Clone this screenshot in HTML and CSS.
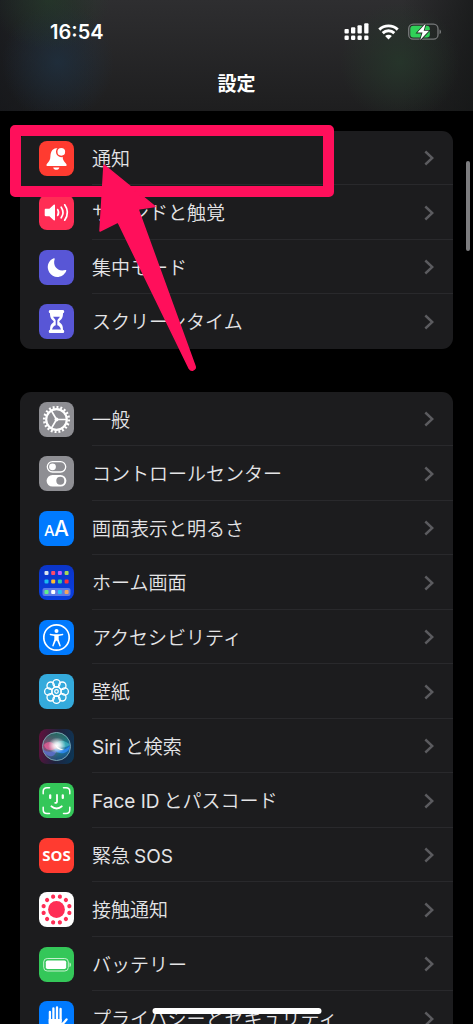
FILE: index.html
```html
<!DOCTYPE html>
<html lang="ja">
<head>
  <meta charset="UTF-8">
  <meta name="viewport" content="width=device-width, initial-scale=1.0">
  <title>設定</title>
  <link rel="stylesheet" href="styles.css">
</head>
<body>

  <!-- shared chevron -->
  <svg class="defs" aria-hidden="true">
    <symbol id="chevron" viewBox="0 0 10 16">
      <path d="M1.300 1.500 8.300 8l-7 6.500" fill="none" stroke="currentColor" stroke-width="2.400"/>
    </symbol>
  </svg>

  <!-- Header -->
  <header class="header">
    <div class="status-bar">
      <span class="time">16:54</span>
      <div class="status-icons">
        <svg width="25" height="18" viewBox="0 0 25 18" fill="#fff">
          <rect x="0.500" y="6" width="4.300" height="4.500" rx="1"/>
          <rect x="7" y="4.300" width="4.300" height="6.200" rx="1"/>
          <rect x="13.500" y="2.300" width="4.300" height="8.200" rx="1"/>
          <rect x="20.200" y="0.300" width="4.300" height="10.200" rx="1"/>
          <rect x="0.500" y="12.500" width="4.300" height="4.500" rx="1.300"/>
          <rect x="7" y="12.500" width="4.300" height="4.500" rx="1.300"/>
          <rect x="13.500" y="12.500" width="4.300" height="4.500" rx="1.300"/>
          <rect x="20.200" y="12.500" width="4.300" height="4.500" rx="1.300"/>
        </svg>
        <svg width="21" height="16" viewBox="0 0 21 16">
          <path d="M1.300 5.600a13.200 13.200 0 0 1 18.400 0M4.700 9.100a8.300 8.300 0 0 1 11.600 0" fill="none" stroke="#fff" stroke-width="2.900"/>
          <path d="M10.500 15.600 7.100 12.100a4.900 4.900 0 0 1 6.800 0z" fill="#fff"/>
        </svg>
        <svg width="34" height="18" viewBox="0 0 34 18">
          <rect x="0.700" y="1.200" width="29.300" height="15" rx="4.500" fill="none" stroke="#77797a" stroke-width="1.300"/>
          <path d="M31.500 6.500c2 .6 2 4 0 4.600z" fill="#77797a"/>
          <rect x="2.300" y="2.800" width="19.500" height="11.800" rx="3" fill="#30d158"/>
          <path d="M17.700.5 9.300 9.600h5.200l-2.300 7.500 8.800-9.400h-5.300z" fill="#fff" stroke="#222b25" stroke-width="1.600" paint-order="stroke"/>
        </svg>
      </div>
    </div>
    <h1 class="title">設定</h1>
  </header>

  <!-- Settings list -->
  <main class="settings">
    <nav class="group">
      <a class="row" href="#">
        <svg class="icon red" viewBox="0 0 35 35">
          <path d="M17.300 7.300c-4.600.6-5.600 4.200-5.900 8.200-.2 3.300-1 4.700-3 6.700-1.400 1.400-1.300 2.900.5 2.900h17.300c1.800 0 1.900-1.500.5-2.900-2-2-2.900-3.400-3.100-6.700-.3-4-1.700-7.600-6.300-8.200z" fill="#fff"/>
          <path d="M14.200 26.400h6.200c-.5 3.200-5.700 3.200-6.200 0z" fill="#fff"/>
          <circle cx="22.300" cy="10.800" r="4.600" fill="#fff" stroke="#ff3b30" stroke-width="1.500"/>
        </svg>
        <span class="label">通知</span>
        <svg class="chevron"><use href="#chevron"/></svg>
      </a>
      <a class="row" href="#">
        <svg class="icon pink" viewBox="0 0 35 35">
          <path d="M6.800 13.800h3.600l4.300-4c.7-.6 1.300-.3 1.300.5v14.400c0 .8-.6 1.100-1.300.5l-4.300-4H6.800c-.7 0-1.100-.4-1.100-1.100v-5.200c0-.7.4-1.100 1.100-1.100z" fill="#fff"/>
          <path d="M18.700 14.600c1.100 1.800 1.100 4 0 5.800M22.200 12.200c2.200 3.300 2.200 7.300 0 10.600M25.700 9.800c3.300 4.700 3.300 10.700 0 15.400" fill="none" stroke="#fff" stroke-width="1.700" stroke-linecap="round"/>
        </svg>
        <span class="label">サウンドと触覚</span>
        <svg class="chevron"><use href="#chevron"/></svg>
      </a>
      <a class="row" href="#">
        <svg class="icon indigo" viewBox="0 0 35 35">
          <path d="M14.800 8.300c.6-.3 1.100.1.900.8-2.400 7 3.200 13.200 10.600 10.900.8-.3 1.200.2.900.9-3.300 7.400-12.900 8.100-17 1.300-3.100-5.500-1-11.700 4.600-13.900z" fill="#fff"/>
        </svg>
        <span class="label">集中モード</span>
        <svg class="chevron"><use href="#chevron"/></svg>
      </a>
      <a class="row" href="#">
        <svg class="icon indigo" viewBox="0 0 35 35">
          <path d="M11.500 6h12c1.200 0 1.700.6 1.700 1.600s-.5 1.500-1.200 1.700c0 4.300-1.200 6-3.200 7.400-.8.600-.8 1.200 0 1.800 2 1.400 3.200 3.100 3.200 7.200.7.200 1.200.7 1.200 1.700s-.5 1.600-1.700 1.600h-12c-1.200 0-1.700-.6-1.700-1.600s.5-1.500 1.200-1.700c0-4.100 1.200-5.800 3.200-7.200.8-.6.8-1.200 0-1.800-2-1.400-3.200-3.100-3.200-7.400-.7-.2-1.200-.7-1.200-1.700S10.300 6 11.500 6z" fill="#fff"/>
          <path d="M14.100 12.700h6.800c-.5 1.500-2.600 2.300-2.600 4.100v4.400c1.700.5 3.200 2 3.600 4.300h-8.800c.4-2.300 1.900-3.800 3.600-4.300v-4.400c0-1.800-2.100-2.600-2.600-4.100z" fill="#5856d6"/>
        </svg>
        <span class="label">スクリーンタイム</span>
        <svg class="chevron"><use href="#chevron"/></svg>
      </a>
    </nav>

    <nav class="group">
      <a class="row" href="#">
        <svg class="icon gray" viewBox="0 0 35 35">
          <g fill="none" stroke="#fff">
            <circle cx="17.500" cy="17.500" r="12.300" stroke-width="2.600" pathLength="40" stroke-dasharray="1 1"/>
            <circle cx="17.500" cy="17.500" r="10.300" stroke-width="2.200"/>
            <path d="M17.500 17.500h10M17.500 17.500l-5-8.700M17.500 17.500l-5 8.700" stroke-width="1.700"/>
          </g>
          <circle cx="17.500" cy="17.500" r="2" fill="#fff"/>
        </svg>
        <span class="label">一般</span>
        <svg class="chevron"><use href="#chevron"/></svg>
      </a>
      <a class="row" href="#">
        <svg class="icon gray" viewBox="0 0 35 35">
          <rect x="8.300" y="5.600" width="18.400" height="10.400" rx="5.200" fill="none" stroke="#fff" stroke-width="1.300"/>
          <circle cx="13.500" cy="10.800" r="3.400" fill="#fff"/>
          <rect x="7.600" y="19" width="19.800" height="11.600" rx="5.800" fill="#fff"/>
          <circle cx="21.300" cy="24.800" r="4" fill="#8e8e93"/>
        </svg>
        <span class="label">コントロールセンター</span>
        <svg class="chevron"><use href="#chevron"/></svg>
      </a>
      <a class="row" href="#">
        <svg class="icon blue" viewBox="0 0 35 35">
          <text class="icon-text" x="5" y="25" font-size="15">A</text>
          <text class="icon-text" x="15" y="25" font-size="21">A</text>
        </svg>
        <span class="label">画面表示と明るさ</span>
        <svg class="chevron"><use href="#chevron"/></svg>
      </a>
      <a class="row" href="#">
        <svg class="icon home" viewBox="0 0 35 35">
          <rect x="3.500" y="23" width="28" height="8" rx="2" fill="#5d7be6"/>
          <rect x="5.500" y="6" width="4" height="4" rx="1" fill="#dce6ef"/>
          <rect x="12.200" y="6" width="4" height="4" rx="1" fill="#ff4a68"/>
          <rect x="18.900" y="6" width="4" height="4" rx="1" fill="#c15cff"/>
          <rect x="25.600" y="6" width="4" height="4" rx="1" fill="#a6d957"/>
          <rect x="5.500" y="14.500" width="4" height="4" rx="1" fill="#1bbcf2"/>
          <rect x="12.200" y="14.500" width="4" height="4" rx="1" fill="#ffbd2e"/>
          <rect x="18.900" y="14.500" width="4" height="4" rx="1" fill="#2fd0a0"/>
          <rect x="25.600" y="14.500" width="4" height="4" rx="1" fill="#ff3038"/>
          <rect x="5.500" y="25" width="4" height="4" rx="1" fill="#5df08a"/>
          <rect x="12.200" y="25" width="4" height="4" rx="1" fill="#fff"/>
          <rect x="18.900" y="25" width="4" height="4" rx="1" fill="#20c5f5"/>
          <rect x="25.600" y="25" width="4" height="4" rx="1" fill="#f4a45e"/>
        </svg>
        <span class="label">ホーム画面</span>
        <svg class="chevron"><use href="#chevron"/></svg>
      </a>
      <a class="row" href="#">
        <svg class="icon blue" viewBox="0 0 35 35">
          <circle cx="17.500" cy="17.500" r="12.700" fill="none" stroke="#fff" stroke-width="1.700"/>
          <circle cx="17.500" cy="10.900" r="2" fill="#fff"/>
          <path d="M11.300 13.700c-.9-.2-.7 1.300 0 1.500l4 .9v3.500l-2 6c-.3 1 .9 1.300 1.300.4l2.300-5.300h1.200l2.300 5.300c.4.900 1.600.6 1.300-.4l-2-6v-3.500l4-.9c.7-.2.900-1.700 0-1.500-4 .8-8.400.8-12.400 0z" fill="#fff"/>
        </svg>
        <span class="label">アクセシビリティ</span>
        <svg class="chevron"><use href="#chevron"/></svg>
      </a>
      <a class="row" href="#">
        <svg class="icon cyan" viewBox="0 0 35 35">
          <g fill="none" stroke="#fff" stroke-width="1.300">
            <circle cx="17.500" cy="9.300" r="3.700"/>
            <circle cx="23.300" cy="11.700" r="3.700"/>
            <circle cx="25.700" cy="17.500" r="3.700"/>
            <circle cx="23.300" cy="23.300" r="3.700"/>
            <circle cx="17.500" cy="25.700" r="3.700"/>
            <circle cx="11.700" cy="23.300" r="3.700"/>
            <circle cx="9.300" cy="17.500" r="3.700"/>
            <circle cx="11.700" cy="11.700" r="3.700"/>
            <circle cx="17.500" cy="17.500" r="4.600"/>
            <circle cx="17.500" cy="17.500" r="1.800"/>
          </g>
        </svg>
        <span class="label">壁紙</span>
        <svg class="chevron"><use href="#chevron"/></svg>
      </a>
      <a class="row" href="#">
        <svg class="icon siri" viewBox="0 0 35 35">
          <defs>
            <linearGradient id="orb" x1="0" y1="0.300" x2="1" y2="0.700">
              <stop offset="0" stop-color="#b03a72"/>
              <stop offset="0.450" stop-color="#6d7596"/>
              <stop offset="0.700" stop-color="#2386a0"/>
              <stop offset="1" stop-color="#1763c0"/>
            </linearGradient>
            <linearGradient id="shade" x1="0" y1="0" x2="0" y2="1">
              <stop offset="0" stop-color="#1f6a60"/>
              <stop offset="0.500" stop-color="#15584f" stop-opacity="0"/>
              <stop offset="1" stop-color="#1f3a70" stop-opacity="0.800"/>
            </linearGradient>
            <radialGradient id="glow">
              <stop offset="0" stop-color="#fff"/>
              <stop offset="0.350" stop-color="#fff" stop-opacity="0.800"/>
              <stop offset="1" stop-color="#fff" stop-opacity="0"/>
            </radialGradient>
          </defs>
          <circle cx="17.500" cy="17.500" r="14" fill="url(#orb)"/>
          <circle cx="17.500" cy="17.500" r="14" fill="url(#shade)" stroke="#78a3ae" stroke-width="1"/>
          <path d="M15 20c5 1 11 2 16-3-1 6-6 8-10 7s-5-2-6-4z" fill="#2b86ea"/>
          <path d="M4 20c4 4 9 3 14 1-2 6-5 7-8 6s-5-3-6-7z" fill="#5c6fd0" opacity="0.800"/>
          <path d="M5 16c4-5 9-3 13 2-5 5-11 4-13-2z" fill="#f0639a" opacity="0.700"/>
          <path d="M17 14c5-4 10-2 14 2-5 3-9 3-14-2z" fill="#43c4c9" opacity="0.600"/>
          <ellipse cx="18" cy="16.500" rx="9" ry="8" fill="url(#glow)"/>
          <path d="M16 15c2 3 5 5 9 6-4 .5-8-1-9-6z" fill="#fff"/>
        </svg>
        <span class="label"><span class="latin-start">Siri</span>と検索</span>
        <svg class="chevron"><use href="#chevron"/></svg>
      </a>
      <a class="row" href="#">
        <svg class="icon green" viewBox="0 0 35 35">
          <g fill="none" stroke="#fff" stroke-linecap="round">
            <path d="M4.200 10.700V8.500c0-2.500 1.300-3.800 3.800-3.800h2.500M24.500 4.700H27c2.500 0 3.800 1.300 3.800 3.800v2.200M30.800 24.300v2.500c0 2.500-1.300 3.800-3.800 3.800h-2.500M10.500 30.600H8c-2.500 0-3.800-1.300-3.800-3.800v-2.500" stroke-width="1.500"/>
            <path d="M11.200 12.300v2.600M23.800 12.300v2.600" stroke-width="2.300"/>
            <path d="M18 12v6.200c0 1.300-.6 1.800-1.800 1.700" stroke-width="1.800"/>
            <path d="M12.500 23.400c2.900 2.800 7.300 2.800 10.200 0" stroke-width="2"/>
          </g>
        </svg>
        <span class="label"><span class="latin-start">Face ID</span>とパスコード</span>
        <svg class="chevron"><use href="#chevron"/></svg>
      </a>
      <a class="row" href="#">
        <svg class="icon red" viewBox="0 0 35 35">
          <text class="icon-text sos" x="17.500" y="23" font-size="15" text-anchor="middle">SOS</text>
        </svg>
        <span class="label">緊急<span class="latin-end">SOS</span></span>
        <svg class="chevron"><use href="#chevron"/></svg>
      </a>
      <a class="row" href="#">
        <svg class="icon white" viewBox="0 0 35 35">
          <circle cx="17.500" cy="17.500" r="8.400" fill="#ff2d55"/>
          <circle cx="17.500" cy="17.500" r="13.300" fill="none" stroke="#ff2d55" stroke-width="4.200" stroke-linecap="round" pathLength="120" stroke-dasharray="0.010 9.990" stroke-dashoffset="-5"/>
        </svg>
        <span class="label">接触通知</span>
        <svg class="chevron"><use href="#chevron"/></svg>
      </a>
      <a class="row" href="#">
        <svg class="icon green" viewBox="0 0 35 35">
          <rect x="4.700" y="11.500" width="24.600" height="12.500" rx="3.500" fill="none" stroke="#c5f0cf" stroke-width="1"/>
          <rect x="6.800" y="13.600" width="20.400" height="8.300" rx="1.700" fill="#fff"/>
          <path d="M30.500 15.500c1.900.6 1.900 3.900 0 4.500z" fill="#c5f0cf"/>
        </svg>
        <span class="label">バッテリー</span>
        <svg class="chevron"><use href="#chevron"/></svg>
      </a>
      <a class="row" href="#">
        <svg class="icon blue" viewBox="0 0 35 35">
          <g fill="none" stroke="#fff" stroke-width="2.300" stroke-linecap="round">
            <path d="M10.900 11v11M14.400 7.500V20M18 6.500V20M21.600 8v12M22 25l5.500-6.500"/>
          </g>
          <path d="M9.700 18h13v4l2.300-1c-1 5-3 9-7.500 9-5 0-7.800-4-7.800-8z" fill="#fff"/>
        </svg>
        <span class="label">プライバシーとセキュリティ</span>
        <svg class="chevron"><use href="#chevron"/></svg>
      </a>
    </nav>
  </main>

  <!-- Overlays -->
  <div class="scroll-thumb"></div>
  <div class="home-indicator"></div>
  <div class="highlight"></div>
  <svg class="arrow" width="100" height="215" viewBox="0 0 100 215">
    <path d="M5 5 56 46.500 39 49l57 157q1 3-2 4-2 1-4-2L19 62 1 71z" fill="#ff0f5b" stroke="#ff0f5b" stroke-width="1.500" stroke-linejoin="round"/>
  </svg>

</body>
</html>
```
FILE: styles.css
```css
* {
  box-sizing: border-box;
}

body {
  position: relative;
  display: flex;
  flex-direction: column;
  height: 100vh;
  margin: 0;
  overflow: hidden;
  background: #000;
  color: #e4e4e6;
  font-family: Inter, "Noto Sans CJK JP", sans-serif;
  font-size: 19px;
}

.defs {
  position: absolute;
  width: 0;
  height: 0;
}

/* Header */
.header {
  flex: none;
  height: 111px;
  padding-top: 17px;
  background:
    radial-gradient(ellipse 60px 50px at 50px 0, rgba(36, 62, 42, 0.6), transparent),
    radial-gradient(ellipse 56px 60px at 58px 62px, rgba(31, 48, 64, 0.8), transparent),
    radial-gradient(ellipse 60px 60px at calc(100% - 73px) 62px, rgba(38, 56, 43, 0.8), transparent),
    linear-gradient(90deg, rgba(20, 22, 26, 0.7), transparent 20%, transparent 85%, rgba(20, 22, 22, 0.7)),
    linear-gradient(#2e2e30, #1e1e1f);
}

.status-bar {
  display: flex;
  align-items: center;
  justify-content: space-between;
  height: 30px;
  padding: 0 31px 0 50px;
}

.time {
  color: #fff;
  font-size: 20px;
  font-weight: 600;
}

.status-icons {
  display: flex;
  align-items: center;
  gap: 9px;
}

.title {
  margin: 24px 0 0;
  color: #fff;
  font-size: 19px;
  font-weight: 700;
  line-height: 28px;
  text-align: center;
}

/* List */
.settings {
  flex: 1;
  min-height: 0;
  padding: 20px 20px 0;
  overflow: hidden;
}

.group {
  margin-bottom: 43px;
  overflow: hidden;
  background: #1c1c1e;
  border-radius: 11px;
}

.row {
  display: flex;
  align-items: center;
  height: 54px;
  padding-left: 19px;
  color: inherit;
  text-decoration: none;
}

.row:nth-child(even) {
  height: 55px;
}

.label {
  flex: 1;
  align-self: stretch;
  margin-left: 18px;
  border-bottom: 1px solid #29292c;
  font-weight: 350;
  line-height: 58px;
  white-space: nowrap;
}

.row:last-child .label {
  border-bottom: none;
}

.latin-start,
.latin-end {
  font-weight: 400;
}

.latin-start {
  margin-right: 4px;
}

.latin-end {
  margin-left: 4px;
}

.chevron {
  width: 10px;
  height: 16px;
  margin-left: -29px;
  margin-right: 19px;
  color: #5b5b5f;
}

/* Icons */
.icon {
  flex: none;
  width: 35px;
  height: 35px;
  border-radius: 8px;
}

.icon-text {
  fill: #fff;
  font-family: Inter, sans-serif;
  font-weight: 500;
}

.icon-text.sos {
  font-family: "Open Sans", sans-serif;
  font-weight: 700;
}

.red {
  background: #ff3b30;
}

.pink {
  background: #ff2d55;
}

.indigo {
  background: #5856d6;
}

.gray {
  background: #8e8e93;
}

.blue {
  background: #007aff;
}

.cyan {
  background: #34aadc;
}

.green {
  background: #34c759;
}

.white {
  background: #fff;
}

.home {
  background: linear-gradient(#0b35c8, #0a3fe0);
}

.siri {
  background: linear-gradient(100deg, #64103c, #20223c 50%, #0b3858);
}

/* Overlays */
.scroll-thumb {
  position: absolute;
  top: 161px;
  right: 3px;
  width: 4px;
  height: 90px;
  background: #7d7d7f;
  border-radius: 2px;
}

.home-indicator {
  position: absolute;
  bottom: 10px;
  left: 50%;
  width: 169px;
  height: 6px;
  background: #fff;
  border-radius: 3px;
  transform: translateX(-50%);
}

.highlight {
  position: absolute;
  top: 125px;
  left: 10px;
  width: 324px;
  height: 72px;
  border: 11px solid #ff0f5b;
  border-radius: 5px;
}

.arrow {
  position: absolute;
  top: 160px;
  left: 99px;
}
```
